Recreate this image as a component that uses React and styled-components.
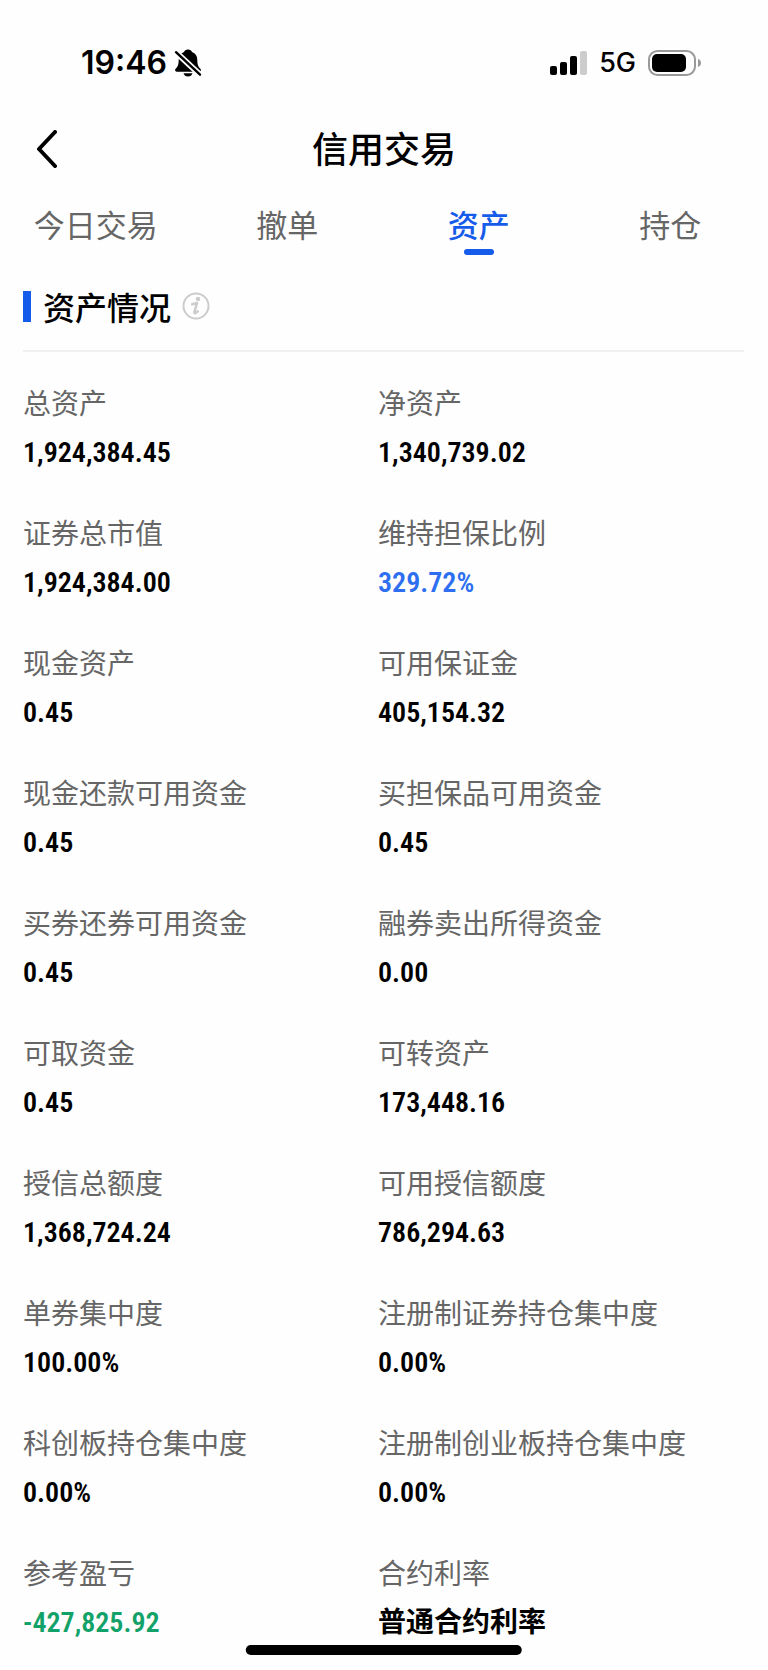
import React, { useState } from 'react';
import styled, { createGlobalStyle } from 'styled-components';

const GlobalStyle = createGlobalStyle`
  * {
    box-sizing: border-box;
  }

  body {
    margin: 0;
    background-color: #fefefe;
    color: #000;
    font-family: 'Noto Sans CJK SC', sans-serif;
  }
`;

const Page = styled.div`
  padding-bottom: 27px;
`;

const StatusBar = styled.div`
  display: flex;
  justify-content: space-between;
  align-items: center;
  height: 106px;
  padding: 20px 67px 0 81px;
  font-family: Inter, sans-serif;
`;

const StatusGroup = styled.div`
  display: flex;
  align-items: center;
  gap: ${({ $gap }) => $gap}px;
`;

const Clock = styled.span`
  font-size: 32px;
  font-weight: 600;
  line-height: 36px;
`;

const Network = styled.span`
  font-size: 27px;
  font-weight: 500;
  line-height: 36px;
`;

const Icon = styled.svg`
  display: block;
  flex: none;
`;

const Header = styled.header`
  display: grid;
  grid-template-columns: 48px 1fr 48px;
  align-items: center;
  height: 86px;
  padding: 0 22px;
`;

const BackButton = styled.button`
  display: flex;
  align-items: center;
  justify-content: center;
  height: 48px;
  padding: 0;
  border: none;
  background: none;
  cursor: pointer;
`;

const Title = styled.h1`
  margin: 0;
  padding-bottom: 5px;
  font-size: 36px;
  font-weight: 500;
  line-height: 48px;
  text-align: center;
`;

const Tabs = styled.nav`
  display: grid;
  grid-template-columns: repeat(4, 1fr);
  padding-right: 2px;
`;

const Tab = styled.button`
  display: flex;
  flex-direction: column;
  align-items: center;
  gap: 1px;
  padding: 8px 0 0;
  border: none;
  background: none;
  color: ${({ $active }) => ($active ? '#165ceb' : '#666')};
  font-family: inherit;
  font-size: 31px;
  font-weight: ${({ $active }) => ($active ? 500 : 400)};
  line-height: 48px;
  cursor: pointer;

  &::after {
    content: '';
    width: 30px;
    height: 6px;
    border-radius: 3px;
    background-color: ${({ $active }) => ($active ? '#165ceb' : 'transparent')};
  }
`;

const SectionHead = styled.div`
  display: flex;
  align-items: center;
  height: 97px;
  margin: 0 24px 0 23px;
  padding-top: 7px;
  border-bottom: 2px solid #f0f0f0;
`;

const SectionTitle = styled.h2`
  display: flex;
  align-items: center;
  gap: 12px;
  margin: 0;
  font-size: 32px;
  font-weight: 500;
  line-height: 48px;

  &::before {
    content: '';
    width: 8px;
    height: 31px;
    background-color: #165ceb;
  }
`;

const InfoButton = styled.button`
  display: flex;
  margin-left: 11px;
  padding: 0;
  border: none;
  background: none;
  cursor: pointer;
`;

const AssetGrid = styled.dl`
  display: grid;
  grid-template-columns: 1fr 1fr;
  row-gap: 39px;
  margin: 0;
  padding: 30px 35px 0 23px;
`;

const Asset = styled.div`
  display: flex;
  flex-direction: column;
  gap: 11px;
`;

const Label = styled.dt`
  color: #666;
  font-size: 28px;
  line-height: 40px;
  white-space: nowrap;
`;

const tones = {
  link: '#2d6ff0',
  fall: '#12a269',
};

const Value = styled.dd`
  margin: 0;
  color: ${({ $tone }) => tones[$tone] || '#000'};
  font-family: 'Roboto Condensed', Roboto, 'Noto Sans CJK SC', sans-serif;
  font-size: 28px;
  font-weight: 600;
  line-height: 40px;
`;

const HomeBar = styled.div`
  position: fixed;
  bottom: 15px;
  left: 50%;
  width: 36%;
  height: 10px;
  border-radius: 5px;
  background-color: #000;
  transform: translateX(-50%);
`;

const tabs = ['今日交易', '撤单', '资产', '持仓'];

const assets = [
  { label: '总资产', value: '1,924,384.45' },
  { label: '净资产', value: '1,340,739.02' },
  { label: '证券总市值', value: '1,924,384.00' },
  { label: '维持担保比例', value: '329.72%', tone: 'link' },
  { label: '现金资产', value: '0.45' },
  { label: '可用保证金', value: '405,154.32' },
  { label: '现金还款可用资金', value: '0.45' },
  { label: '买担保品可用资金', value: '0.45' },
  { label: '买券还券可用资金', value: '0.45' },
  { label: '融券卖出所得资金', value: '0.00' },
  { label: '可取资金', value: '0.45' },
  { label: '可转资产', value: '173,448.16' },
  { label: '授信总额度', value: '1,368,724.24' },
  { label: '可用授信额度', value: '786,294.63' },
  { label: '单券集中度', value: '100.00%' },
  { label: '注册制证券持仓集中度', value: '0.00%' },
  { label: '科创板持仓集中度', value: '0.00%' },
  { label: '注册制创业板持仓集中度', value: '0.00%' },
  { label: '参考盈亏', value: '-427,825.92', tone: 'fall' },
  { label: '合约利率', value: '普通合约利率' },
];

const MutedBell = () => (
  <Icon width="28" height="28" viewBox="0 0 28 28" aria-hidden="true">
    <path d="M14 .5c-2.200 0-3.500 1.100-4 2.600C6.500 4.400 4.700 7.300 4.700 11c0 5-1.200 7-2.900 8.600-1.300 1.300-.8 3.100.9 3.100h22.600c1.700 0 2.200-1.800.9-3.100-1.700-1.600-2.900-3.600-2.900-8.600 0-3.700-1.800-6.600-5.300-7.900-.5-1.500-1.800-2.600-4-2.600z" />
    <path d="M9.500 24.200h9c-.5 2-2.300 3.300-4.500 3.300s-4-1.300-4.500-3.300z" />
    <path d="M0 1.500l28 26" stroke="#fefefe" strokeWidth="6" />
    <path d="M2 3.200l24 22.500" stroke="#000" strokeWidth="2.400" strokeLinecap="round" />
  </Icon>
);

const Signal = () => (
  <Icon width="37" height="25" viewBox="0 0 37 25" aria-hidden="true">
    <rect x="0" y="15" width="7" height="9" rx="2" />
    <rect x="10" y="11" width="7" height="13" rx="2" />
    <rect x="20" y="5" width="7" height="19" rx="2" />
    <rect x="30" y="0" width="7" height="24" rx="2" fill="#ccc" />
  </Icon>
);

const Battery = () => (
  <Icon width="53" height="26" viewBox="0 0 53 26" aria-hidden="true">
    <rect x="1" y="1" width="46" height="24" rx="8.500" fill="none" stroke="#999" strokeWidth="2" />
    <rect x="4" y="4" width="34" height="18" rx="5" />
    <path d="M50 9c2 .6 3 2.200 3 4s-1 3.400-3 4z" fill="#999" />
  </Icon>
);

const App = () => {
  const [activeTab, setActiveTab] = useState('资产');

  return (
    <Page>
      <GlobalStyle />
      <StatusBar>
        <StatusGroup $gap={7}>
          <Clock>19:46</Clock>
          <MutedBell />
        </StatusGroup>
        <StatusGroup $gap={12}>
          <Signal />
          <Network>5G</Network>
          <Battery />
        </StatusGroup>
      </StatusBar>

      <Header>
        <BackButton aria-label="返回">
          <Icon width="22" height="38" viewBox="0 0 22 38" fill="none">
            <path
              d="M20 2L4 19l16 17"
              stroke="#000"
              strokeWidth="4"
              strokeLinecap="round"
              strokeLinejoin="round"
            />
          </Icon>
        </BackButton>
        <Title>信用交易</Title>
      </Header>

      <Tabs>
        {tabs.map((tab) => (
          <Tab key={tab} $active={tab === activeTab} onClick={() => setActiveTab(tab)}>
            {tab}
          </Tab>
        ))}
      </Tabs>

      <SectionHead>
        <SectionTitle>资产情况</SectionTitle>
        <InfoButton aria-label="说明">
          <Icon width="28" height="28" viewBox="0 0 28 28" fill="none">
            <circle cx="14" cy="14" r="12.500" stroke="#ccc" strokeWidth="2" />
            <circle cx="16" cy="7" r="2.200" fill="#ccc" />
            <path
              d="M10.200 12.300l4.800-1.300-2.600 9c-.3 1.500 1 1.600 3.300-.6"
              stroke="#ccc"
              strokeWidth="2.600"
              strokeLinecap="round"
              strokeLinejoin="round"
            />
          </Icon>
        </InfoButton>
      </SectionHead>

      <AssetGrid>
        {assets.map(({ label, value, tone }) => (
          <Asset key={label}>
            <Label>{label}</Label>
            <Value $tone={tone}>{value}</Value>
          </Asset>
        ))}
      </AssetGrid>

      <HomeBar />
    </Page>
  );
};

export default App;
